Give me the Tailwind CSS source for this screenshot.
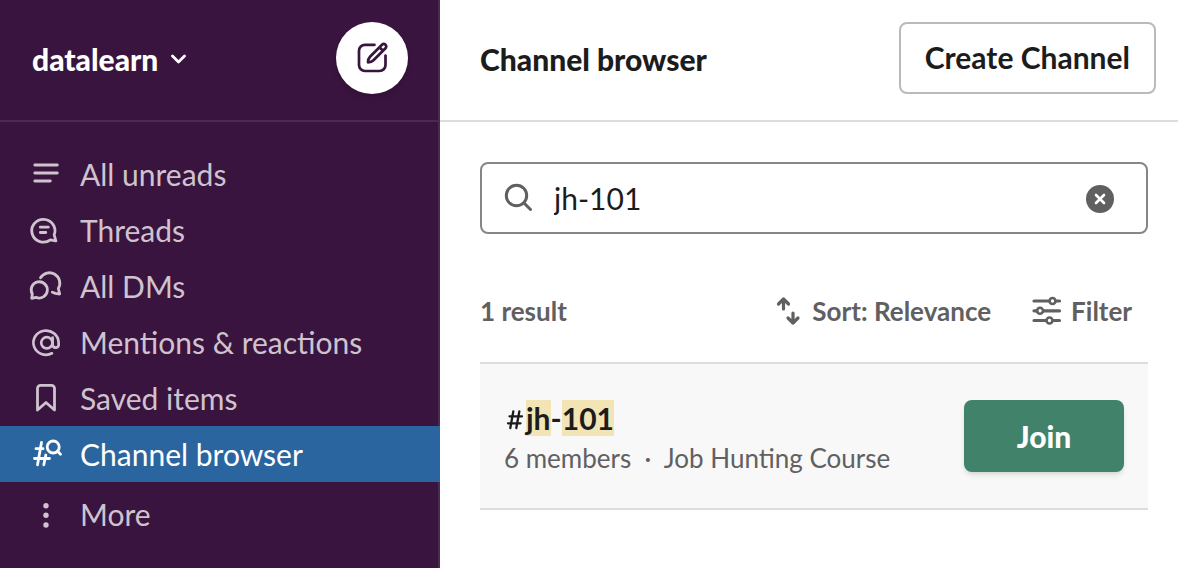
<!DOCTYPE html>
<html lang="en">
<head>
<meta charset="utf-8">
<title>Channel browser</title>
<script src="https://cdn.jsdelivr.net/npm/@tailwindcss/browser@4"></script>
</head>
<body class="flex min-h-screen bg-white font-['Lato',sans-serif] text-[30px] leading-9 text-[#1d1c1d]">
<aside class="flex w-[440px] shrink-0 flex-col border-r-2 border-[#4c2a4f] bg-[#39143e] text-[#cfc3cf]">
  <header class="flex h-[122px] items-center justify-between border-b-2 border-[#4c2a4f] pl-8 pr-[30px] pb-1">
    <button type="button" class="flex items-center gap-3 pt-0.5 text-[30px] font-black text-white">
      <span class="font-['Lato_Black','Lato',sans-serif]">datalearn</span>
      <svg class="size-4" viewBox="0 0 16 16" fill="none" stroke="currentColor" stroke-width="2.8" stroke-linecap="round" stroke-linejoin="round" aria-hidden="true"><path d="M2.500 5l6 6 6-6"/></svg>
    </button>
    <button type="button" aria-label="New message" class="flex size-[72px] items-center justify-center rounded-full bg-white text-[#39143e] shadow-md">
      <svg class="size-9" viewBox="0 0 36 36" fill="none" stroke="currentColor" stroke-width="2.7" stroke-linecap="round" stroke-linejoin="round" aria-hidden="true"><path d="M20.500 4.800H11a6 6 0 0 0-6 6V25a6 6 0 0 0 6 6h14.500a6 6 0 0 0 6-6V15.500"/><path d="M14 22.300c0-2.500.4-4 2-5.600L28 4.700a2.400 2.400 0 0 1 3.500 3.500L19.500 20.300c-1.600 1.600-3.200 2-5.500 2z M25.500 7.300l3.500 3.500"/></svg>
    </button>
  </header>
  <nav aria-label="Sidebar" class="flex flex-col pt-6">
    <a href="#unreads" class="flex h-14 items-center gap-4 px-7">
      <svg class="size-9 shrink-0" viewBox="0 0 36 36" fill="none" stroke="currentColor" stroke-width="2.8" stroke-linecap="round" aria-hidden="true"><path d="M6.800 9h22.500M6.800 17h22.500M6.800 25h15.500"/></svg>
      <span>All unreads</span></a>
    <a href="#threads" class="flex h-14 items-center gap-4 px-7">
      <svg class="size-9 shrink-0" viewBox="0 0 36 36" fill="none" stroke="currentColor" stroke-width="2.8" stroke-linecap="round" stroke-linejoin="round" aria-hidden="true"><path d="M26.200 22.800l1.700 6.200-5.500-1.200A11.600 11.400 0 1 1 26.200 22.800z"/><path d="M12.300 15.200h8M12.300 20.500h5.500"/></svg>
      <span>Threads</span></a>
    <a href="#dms" class="flex h-14 items-center gap-4 px-7">
      <svg class="size-9 shrink-0" viewBox="0 0 36 36" fill="none" stroke="currentColor" stroke-width="2.8" stroke-linecap="round" stroke-linejoin="round" aria-hidden="true"><path d="M4.300 26l-.6 4.300 4.300-1A8.100 8.100 0 1 0 4.300 26z"/><path d="M12.500 9.800A10.300 10.300 0 1 1 30.300 20.500l1.400 5.500-4.200-.6-3.200-1.200"/></svg>
      <span>All DMs</span></a>
    <a href="#mentions" class="flex h-14 items-center gap-4 px-7">
      <svg class="size-9 shrink-0" viewBox="0 0 36 36" fill="none" stroke="currentColor" stroke-width="2.700" stroke-linecap="round" stroke-linejoin="round" aria-hidden="true"><circle cx="18.800" cy="18.800" r="5.600"/><path d="M24.600 13.500v7.500a3.100 3.100 0 0 0 6 0.500V18.500a12.600 12.100 0 1 0-6.600 10.800"/></svg>
      <span>Mentions &amp; reactions</span></a>
    <a href="#saved" class="flex h-14 items-center gap-4 px-7">
      <svg class="size-9 shrink-0" viewBox="0 0 36 36" fill="none" stroke="currentColor" stroke-width="2.800" stroke-linecap="round" stroke-linejoin="round" aria-hidden="true"><path d="M9.500 30V8.300a3 3 0 0 1 3-3h11a3 3 0 0 1 3 3V30l-8.500-7.500z"/></svg>
      <span>Saved items</span></a>
    <a href="#channels" aria-current="page" class="-mr-0.5 flex h-14 items-center gap-4 bg-[#2b659f] px-7 text-white">
      <svg class="size-9 shrink-0" viewBox="0 0 36 36" fill="none" stroke="currentColor" stroke-width="2.800" stroke-linecap="round" stroke-linejoin="round" aria-hidden="true"><path d="M8 12.700h7M6.500 22.500h15M13.500 6.500L9.500 28.800M17.800 19L15.800 28.800"/><circle cx="25.200" cy="11" r="6"/><path d="M29.500 15.200l3 3"/></svg>
      <span>Channel browser</span></a>
    <a href="#more" class="mt-1 flex h-14 items-center gap-4 px-7">
      <svg class="size-9 shrink-0" viewBox="0 0 36 36" fill="currentColor" aria-hidden="true"><circle cx="18" cy="9.700" r="2.700"/><circle cx="18" cy="19.300" r="2.700"/><circle cx="18" cy="29" r="2.700"/></svg>
      <span>More</span></a>
  </nav>
</aside>
<main class="min-w-0 flex-1">
  <header class="flex h-[122px] items-center justify-between border-b-2 border-[#dddddd] pl-10 pr-[22px] pb-1">
    <h1 class="pt-0.5 font-['Lato_Black','Lato',sans-serif] text-[30px] font-black">Channel browser</h1>
    <button type="button" class="h-[72px] rounded-lg border-2 border-[#bbbabb] px-6 pb-0.5 text-[30px] font-bold">Create Channel</button>
  </header>
  <section class="pl-10 pr-[30px] pt-10">
    <div class="flex h-[72px] items-center gap-4 rounded-lg border-2 border-[#868686] pl-5 pr-8">
      <svg class="size-9 shrink-0 text-[#616061]" viewBox="0 0 36 36" fill="none" stroke="currentColor" stroke-width="3" stroke-linecap="round" aria-hidden="true"><circle cx="14.500" cy="15.500" r="10.200"/><path d="M22 23l6.500 6.500"/></svg>
      <input type="text" value="jh-101" aria-label="Search channels" class="min-w-0 flex-1 outline-none">
      <button type="button" aria-label="Clear search" class="mt-0.5 flex size-7 items-center justify-center rounded-full bg-[#616061] text-white">
        <svg class="size-7" viewBox="0 0 28 28" fill="none" stroke="currentColor" stroke-width="2.600" stroke-linecap="round" aria-hidden="true"><path d="M10 10l8 8M18 10l-8 8"/></svg>
      </button>
    </div>
    <div class="flex h-32 items-center pt-[26px] pr-4 text-[26px] font-bold text-[#616061]">
      <p class="flex-1">1 result</p>
      <button type="button" class="flex items-center gap-2">
        <svg class="size-8" viewBox="0 0 32 32" fill="none" stroke="currentColor" stroke-width="3.200" stroke-linecap="round" stroke-linejoin="round" aria-hidden="true"><path d="M11.500 14V4.500M6.500 9l5-5 5 5M21 18v10M16 23l5 5 5-5"/></svg>
        <span>Sort: Relevance</span>
      </button>
      <button type="button" class="ml-10 flex items-center gap-2">
        <svg class="size-8" viewBox="0 0 32 32" fill="none" stroke="currentColor" stroke-width="3.200" stroke-linecap="round" aria-hidden="true"><path d="M3 6h15M25.500 6h3M3 15.800h3M13 15.800h15.500M3 25.500h12M22 25.500h6.500"/><g stroke-width="2.600"><circle cx="21.500" cy="6" r="3"/><circle cx="9" cy="15.800" r="3"/><circle cx="18.500" cy="25.500" r="3"/></g></svg>
        <span>Filter</span>
      </button>
    </div>
    <article class="flex h-[148px] items-center justify-between border-y-2 border-[#dddddd] bg-[#f8f8f8] pl-6 pr-6">
      <div class="pt-1">
        <h2 class="flex items-center text-[30px] font-bold leading-9">
          <svg class="h-9 w-[22px]" viewBox="0 0 22 36" fill="none" stroke="currentColor" stroke-width="2.300" stroke-linecap="round" aria-hidden="true"><path d="M5.500 16.300h12.500M4 23.300h12.500M9.300 11.500L6.300 28M15.300 11.500l-3 16.500"/></svg>
          <span><mark class="bg-[#f2e4b4] text-inherit">jh</mark>-<mark class="bg-[#f2e4b4] text-inherit">101</mark></span>
        </h2>
        <p class="mt-1 text-[26px] leading-9 text-[#616061]">6 members&nbsp; · &nbsp;Job Hunting Course</p>
      </div>
      <button type="button" class="h-[72px] w-40 rounded-lg bg-[#40826a] font-['Lato_Black','Lato',sans-serif] text-[30px] font-black text-white shadow-md">Join</button>
    </article>
  </section>
</main>
</body>
</html>
